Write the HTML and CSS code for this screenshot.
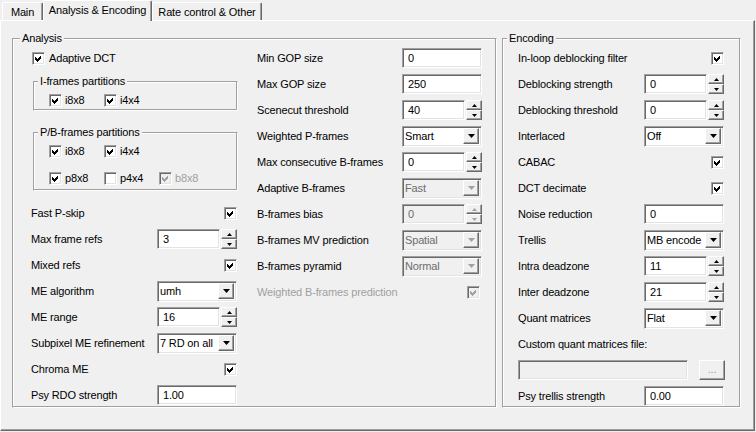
FILE: index.html
```html
<!DOCTYPE html>
<html lang="en">
  <head>
    <meta charset="UTF-8" />
    <title>x264 - Analysis &amp; Encoding</title>
    <link rel="stylesheet" href="styles.css">
  </head>
  <body>
    <div class="window">
      <div class="tabs">
        <div class="tab tab-main">Main</div>
        <div class="tab tab-analysis active">Analysis &amp; Encoding</div>
        <div class="tab tab-rate">Rate control &amp; Other</div>
      </div>

      <div class="panel">
        <fieldset class="group analysis">
          <legend>Analysis</legend>
          <div class="analysis-cols">
            <!-- left column -->
            <div class="col col-left">
              <div class="row row-first">
                <span class="check"><svg viewBox="0 0 9 9"><path d="M1 3 3 5 7 1v3L3 8 1 6z"/></svg></span>
                <span class="opt-text">Adaptive DCT</span>
              </div>

              <fieldset class="subgroup iframes">
                <legend>I-frames partitions</legend>
                <div class="opts">
                  <span class="opt"><span class="check"><svg viewBox="0 0 9 9"><path d="M1 3 3 5 7 1v3L3 8 1 6z"/></svg></span>i8x8</span>
                  <span class="opt"><span class="check"><svg viewBox="0 0 9 9"><path d="M1 3 3 5 7 1v3L3 8 1 6z"/></svg></span>i4x4</span>
                </div>
              </fieldset>

              <fieldset class="subgroup pbframes">
                <legend>P/B-frames partitions</legend>
                <div class="opts">
                  <span class="opt"><span class="check"><svg viewBox="0 0 9 9"><path d="M1 3 3 5 7 1v3L3 8 1 6z"/></svg></span>i8x8</span>
                  <span class="opt"><span class="check"><svg viewBox="0 0 9 9"><path d="M1 3 3 5 7 1v3L3 8 1 6z"/></svg></span>i4x4</span>
                </div>
                <div class="opts">
                  <span class="opt"><span class="check"><svg viewBox="0 0 9 9"><path d="M1 3 3 5 7 1v3L3 8 1 6z"/></svg></span>p8x8</span>
                  <span class="opt"><span class="check"></span>p4x4</span>
                  <span class="opt disabled"><span class="check"><svg viewBox="0 0 9 9"><path d="M1 3 3 5 7 1v3L3 8 1 6z"/></svg></span>b8x8</span>
                </div>
              </fieldset>

              <div class="row row-after-groups">
                <span>Fast P-skip</span>
                <span class="check"><svg viewBox="0 0 9 9"><path d="M1 3 3 5 7 1v3L3 8 1 6z"/></svg></span>
              </div>
              <div class="row">
                <span>Max frame refs</span>
                <span class="spin"><span class="edit">3</span><span class="spin-btns"><span class="spin-btn"><svg viewBox="0 0 5 3"><path d="M2.5 0 5 3H0z"/></svg></span><span class="spin-btn"><svg viewBox="0 0 5 3"><path d="M0 0h5L2.5 3z"/></svg></span></span></span>
              </div>
              <div class="row">
                <span>Mixed refs</span>
                <span class="check"><svg viewBox="0 0 9 9"><path d="M1 3 3 5 7 1v3L3 8 1 6z"/></svg></span>
              </div>
              <div class="row">
                <span>ME algorithm</span>
                <span class="combo"><span class="combo-text">umh</span><span class="drop"><svg viewBox="0 0 7 4"><path d="M0 0h7L3.5 4z"/></svg></span></span>
              </div>
              <div class="row">
                <span>ME range</span>
                <span class="spin"><span class="edit">16</span><span class="spin-btns"><span class="spin-btn"><svg viewBox="0 0 5 3"><path d="M2.5 0 5 3H0z"/></svg></span><span class="spin-btn"><svg viewBox="0 0 5 3"><path d="M0 0h5L2.5 3z"/></svg></span></span></span>
              </div>
              <div class="row">
                <span>Subpixel ME refinement</span>
                <span class="combo"><span class="combo-text">7 RD on all</span><span class="drop"><svg viewBox="0 0 7 4"><path d="M0 0h7L3.5 4z"/></svg></span></span>
              </div>
              <div class="row">
                <span>Chroma ME</span>
                <span class="check"><svg viewBox="0 0 9 9"><path d="M1 3 3 5 7 1v3L3 8 1 6z"/></svg></span>
              </div>
              <div class="row">
                <span>Psy RDO strength</span>
                <span class="edit wide">1.00</span>
              </div>
            </div>

            <!-- middle column -->
            <div class="col col-mid">
              <div class="row">
                <span>Min GOP size</span>
                <span class="edit wide">0</span>
              </div>
              <div class="row">
                <span>Max GOP size</span>
                <span class="edit wide">250</span>
              </div>
              <div class="row">
                <span>Scenecut threshold</span>
                <span class="spin"><span class="edit">40</span><span class="spin-btns"><span class="spin-btn"><svg viewBox="0 0 5 3"><path d="M2.5 0 5 3H0z"/></svg></span><span class="spin-btn"><svg viewBox="0 0 5 3"><path d="M0 0h5L2.5 3z"/></svg></span></span></span>
              </div>
              <div class="row">
                <span>Weighted P-frames</span>
                <span class="combo"><span class="combo-text">Smart</span><span class="drop"><svg viewBox="0 0 7 4"><path d="M0 0h7L3.5 4z"/></svg></span></span>
              </div>
              <div class="row">
                <span>Max consecutive B-frames</span>
                <span class="spin"><span class="edit">0</span><span class="spin-btns"><span class="spin-btn"><svg viewBox="0 0 5 3"><path d="M2.5 0 5 3H0z"/></svg></span><span class="spin-btn"><svg viewBox="0 0 5 3"><path d="M0 0h5L2.5 3z"/></svg></span></span></span>
              </div>
              <div class="row">
                <span>Adaptive B-frames</span>
                <span class="combo disabled"><span class="combo-text">Fast</span><span class="drop"><svg viewBox="0 0 7 4"><path d="M0 0h7L3.5 4z"/></svg></span></span>
              </div>
              <div class="row">
                <span>B-frames bias</span>
                <span class="spin disabled"><span class="edit">0</span><span class="spin-btns"><span class="spin-btn"><svg viewBox="0 0 5 3"><path d="M2.5 0 5 3H0z"/></svg></span><span class="spin-btn"><svg viewBox="0 0 5 3"><path d="M0 0h5L2.5 3z"/></svg></span></span></span>
              </div>
              <div class="row">
                <span>B-frames MV prediction</span>
                <span class="combo disabled"><span class="combo-text">Spatial</span><span class="drop"><svg viewBox="0 0 7 4"><path d="M0 0h7L3.5 4z"/></svg></span></span>
              </div>
              <div class="row">
                <span>B-frames pyramid</span>
                <span class="combo disabled"><span class="combo-text">Normal</span><span class="drop"><svg viewBox="0 0 7 4"><path d="M0 0h7L3.5 4z"/></svg></span></span>
              </div>
              <div class="row disabled">
                <span>Weighted B-frames prediction</span>
                <span class="check check-inset"><svg viewBox="0 0 9 9"><path d="M1 3 3 5 7 1v3L3 8 1 6z"/></svg></span>
              </div>
            </div>
          </div>
        </fieldset>

        <fieldset class="group encoding">
          <legend>Encoding</legend>
          <div class="col col-right">
            <div class="row">
              <span>In-loop deblocking filter</span>
              <span class="check"><svg viewBox="0 0 9 9"><path d="M1 3 3 5 7 1v3L3 8 1 6z"/></svg></span>
            </div>
            <div class="row">
              <span>Deblocking strength</span>
              <span class="spin"><span class="edit">0</span><span class="spin-btns"><span class="spin-btn"><svg viewBox="0 0 5 3"><path d="M2.5 0 5 3H0z"/></svg></span><span class="spin-btn"><svg viewBox="0 0 5 3"><path d="M0 0h5L2.5 3z"/></svg></span></span></span>
            </div>
            <div class="row">
              <span>Deblocking threshold</span>
              <span class="spin"><span class="edit">0</span><span class="spin-btns"><span class="spin-btn"><svg viewBox="0 0 5 3"><path d="M2.5 0 5 3H0z"/></svg></span><span class="spin-btn"><svg viewBox="0 0 5 3"><path d="M0 0h5L2.5 3z"/></svg></span></span></span>
            </div>
            <div class="row">
              <span>Interlaced</span>
              <span class="combo"><span class="combo-text">Off</span><span class="drop"><svg viewBox="0 0 7 4"><path d="M0 0h7L3.5 4z"/></svg></span></span>
            </div>
            <div class="row">
              <span>CABAC</span>
              <span class="check"><svg viewBox="0 0 9 9"><path d="M1 3 3 5 7 1v3L3 8 1 6z"/></svg></span>
            </div>
            <div class="row">
              <span>DCT decimate</span>
              <span class="check"><svg viewBox="0 0 9 9"><path d="M1 3 3 5 7 1v3L3 8 1 6z"/></svg></span>
            </div>
            <div class="row">
              <span>Noise reduction</span>
              <span class="edit wide">0</span>
            </div>
            <div class="row">
              <span>Trellis</span>
              <span class="combo"><span class="combo-text">MB encode</span><span class="drop"><svg viewBox="0 0 7 4"><path d="M0 0h7L3.5 4z"/></svg></span></span>
            </div>
            <div class="row">
              <span>Intra deadzone</span>
              <span class="spin"><span class="edit">11</span><span class="spin-btns"><span class="spin-btn"><svg viewBox="0 0 5 3"><path d="M2.5 0 5 3H0z"/></svg></span><span class="spin-btn"><svg viewBox="0 0 5 3"><path d="M0 0h5L2.5 3z"/></svg></span></span></span>
            </div>
            <div class="row">
              <span>Inter deadzone</span>
              <span class="spin"><span class="edit">21</span><span class="spin-btns"><span class="spin-btn"><svg viewBox="0 0 5 3"><path d="M2.5 0 5 3H0z"/></svg></span><span class="spin-btn"><svg viewBox="0 0 5 3"><path d="M0 0h5L2.5 3z"/></svg></span></span></span>
            </div>
            <div class="row">
              <span>Quant matrices</span>
              <span class="combo"><span class="combo-text">Flat</span><span class="drop"><svg viewBox="0 0 7 4"><path d="M0 0h7L3.5 4z"/></svg></span></span>
            </div>
            <div class="row">
              <span>Custom quant matrices file:</span>
            </div>
            <div class="row">
              <span class="edit file disabled"></span>
              <span class="btn disabled">...</span>
            </div>
            <div class="row">
              <span>Psy trellis strength</span>
              <span class="edit wide">0.00</span>
            </div>
          </div>
        </fieldset>
      </div>
    </div>
  </body>
</html>
```

FILE: styles.css
```css
body {
  margin: 0;
  background: #f0f0f0;
  font-family: "Liberation Sans", Arial, sans-serif;
  font-size: 11px;
  letter-spacing: -0.15px;
  color: #000;
}

.window {
  width: 756px;
  height: 432px;
  overflow: hidden;
}

/* tabs */
.tabs {
  display: flex;
  align-items: flex-end;
  height: 20px;
  padding-left: 2px;
  position: relative;
  z-index: 1;
}

.tab {
  box-sizing: border-box;
  height: 18px;
  padding-top: 3px;
  text-align: center;
  white-space: nowrap;
  border-top: 1px solid #fff;
  border-left: 1px solid #fff;
  border-right: 1px solid #696969;
  box-shadow: inset -1px 0 #a0a0a0;
  border-radius: 2px 2px 0 0;
}

.tab-main {
  width: 41px;
}

.tab-analysis {
  width: 109px;
}

.tab-rate {
  width: 110px;
}

.tab.active {
  height: 21px;
  margin-bottom: -1px;
  padding-top: 3px;
  background: #f0f0f0;
}

/* tab page */
.panel {
  box-sizing: border-box;
  width: 755px;
  height: 411px;
  display: flex;
  gap: 5px;
  padding: 11px 13px 22px 11px;
  border-top: 1px solid #fff;
  border-left: 1px solid #fff;
  border-right: 1px solid #696969;
  border-bottom: 1px solid #696969;
  box-shadow: inset -1px -1px #a0a0a0;
}

.group,
.subgroup {
  box-sizing: border-box;
  margin: 0;
  border: 1px solid;
  border-color: #a0a0a0 #fff #fff #a0a0a0;
  box-shadow: inset -1px -1px #a0a0a0, inset 1px 1px #fff;
  min-width: 0;
}

.group legend,
.subgroup legend {
  padding: 0 2px;
  line-height: 13px;
  background: #f0f0f0;
  margin-left: -11px;
}

.analysis {
  width: 485px;
  padding: 0 14px 0 18px;
}

.encoding {
  flex: 1;
  padding: 0 16px 0 15px;
}

.analysis-cols {
  display: flex;
  gap: 20px;
}

.col-left,
.col-right {
  width: 206px;
}

.col-mid {
  width: 225px;
}

.row {
  display: flex;
  align-items: center;
  justify-content: space-between;
  height: 26px;
  white-space: nowrap;
}

.row-first {
  justify-content: flex-start;
  gap: 4px;
  padding-left: 1px;
}

/* nested partition boxes */
.subgroup {
  margin: 4px -1px 0 2px;
  padding: 2px 0 2px 15px;
}

.iframes {
  padding-bottom: 0;
}

.pbframes {
  margin-top: 15px;
}

.opts {
  display: flex;
  height: 20px;
  align-items: center;
}

.pbframes .opts + .opts {
  margin-top: 7px;
}

.opt {
  display: flex;
  align-items: center;
  gap: 3px;
  width: 55px;
}

.opt.disabled {
  color: #a0a0a0;
}

.row-after-groups {
  margin-top: 9px;
}

.row.disabled span:first-child {
  color: #a0a0a0;
}

/* checkbox */
.check {
  box-sizing: border-box;
  width: 13px;
  height: 13px;
  padding: 1px;
  background: #fff;
  border: 1px solid;
  border-color: #a0a0a0 #fff #fff #a0a0a0;
  box-shadow: inset 1px 1px #696969, inset -1px -1px #e3e3e3;
  flex: none;
}

.check svg {
  display: block;
  width: 9px;
  height: 9px;
  fill: #000;
  shape-rendering: crispEdges;
}

.opt.disabled .check,
.row.disabled .check {
  background: #f0f0f0;
}

.opt.disabled .check svg,
.row.disabled .check svg {
  fill: #a0a0a0;
}

.check-inset {
  margin-right: 2px;
}

/* edit boxes */
.edit {
  box-sizing: border-box;
  display: block;
  width: 63px;
  height: 20px;
  padding: 0 5px;
  line-height: 18px;
  background: #fff;
  border: 1px solid;
  border-color: #a0a0a0 #fff #fff #a0a0a0;
  box-shadow: inset 1px 1px #696969, inset -1px -1px #e3e3e3;
}

.edit.wide {
  width: 80px;
}

.edit.file {
  width: 170px;
  background: #f0f0f0;
}

.spin {
  display: flex;
  gap: 1px;
}

.spin-btns {
  display: flex;
  flex-direction: column;
  width: 16px;
  height: 20px;
}

.spin-btn {
  box-sizing: border-box;
  height: 10px;
  display: flex;
  align-items: center;
  justify-content: center;
  border: 1px solid;
  border-color: #fff #696969 #696969 #fff;
  box-shadow: inset -1px -1px #a0a0a0;
}

.spin-btn svg {
  width: 5px;
  height: 3px;
  fill: #000;
}

.spin.disabled .edit {
  background: #f0f0f0;
  color: #6d6d6d;
}

.spin.disabled .spin-btn svg {
  fill: #a0a0a0;
}

/* combo boxes */
.combo {
  box-sizing: border-box;
  display: flex;
  align-items: center;
  width: 80px;
  height: 21px;
  padding: 1px 2px 2px 2px;
  background: #fff;
  border: 1px solid;
  border-color: #a0a0a0 #fff #fff #a0a0a0;
  box-shadow: inset 1px 1px #696969, inset -1px -1px #e3e3e3;
}

.combo-text {
  flex: 1;
  overflow: hidden;
}

.drop {
  box-sizing: border-box;
  display: flex;
  align-items: center;
  justify-content: center;
  width: 16px;
  height: 16px;
  background: #f0f0f0;
  border: 1px solid;
  border-color: #fff #696969 #696969 #fff;
  box-shadow: inset -1px -1px #a0a0a0;
}

.drop svg {
  width: 7px;
  height: 4px;
  fill: #000;
}

.combo.disabled {
  background: #f0f0f0;
  color: #6d6d6d;
}

.combo.disabled .drop svg {
  fill: #a0a0a0;
}

/* small button next to the file box */
.btn {
  box-sizing: border-box;
  width: 26px;
  height: 20px;
  margin-right: -1px;
  text-align: center;
  line-height: 16px;
  color: #a0a0a0;
  border: 1px solid;
  border-color: #fff #696969 #696969 #fff;
  box-shadow: inset -1px -1px #a0a0a0;
}
```
